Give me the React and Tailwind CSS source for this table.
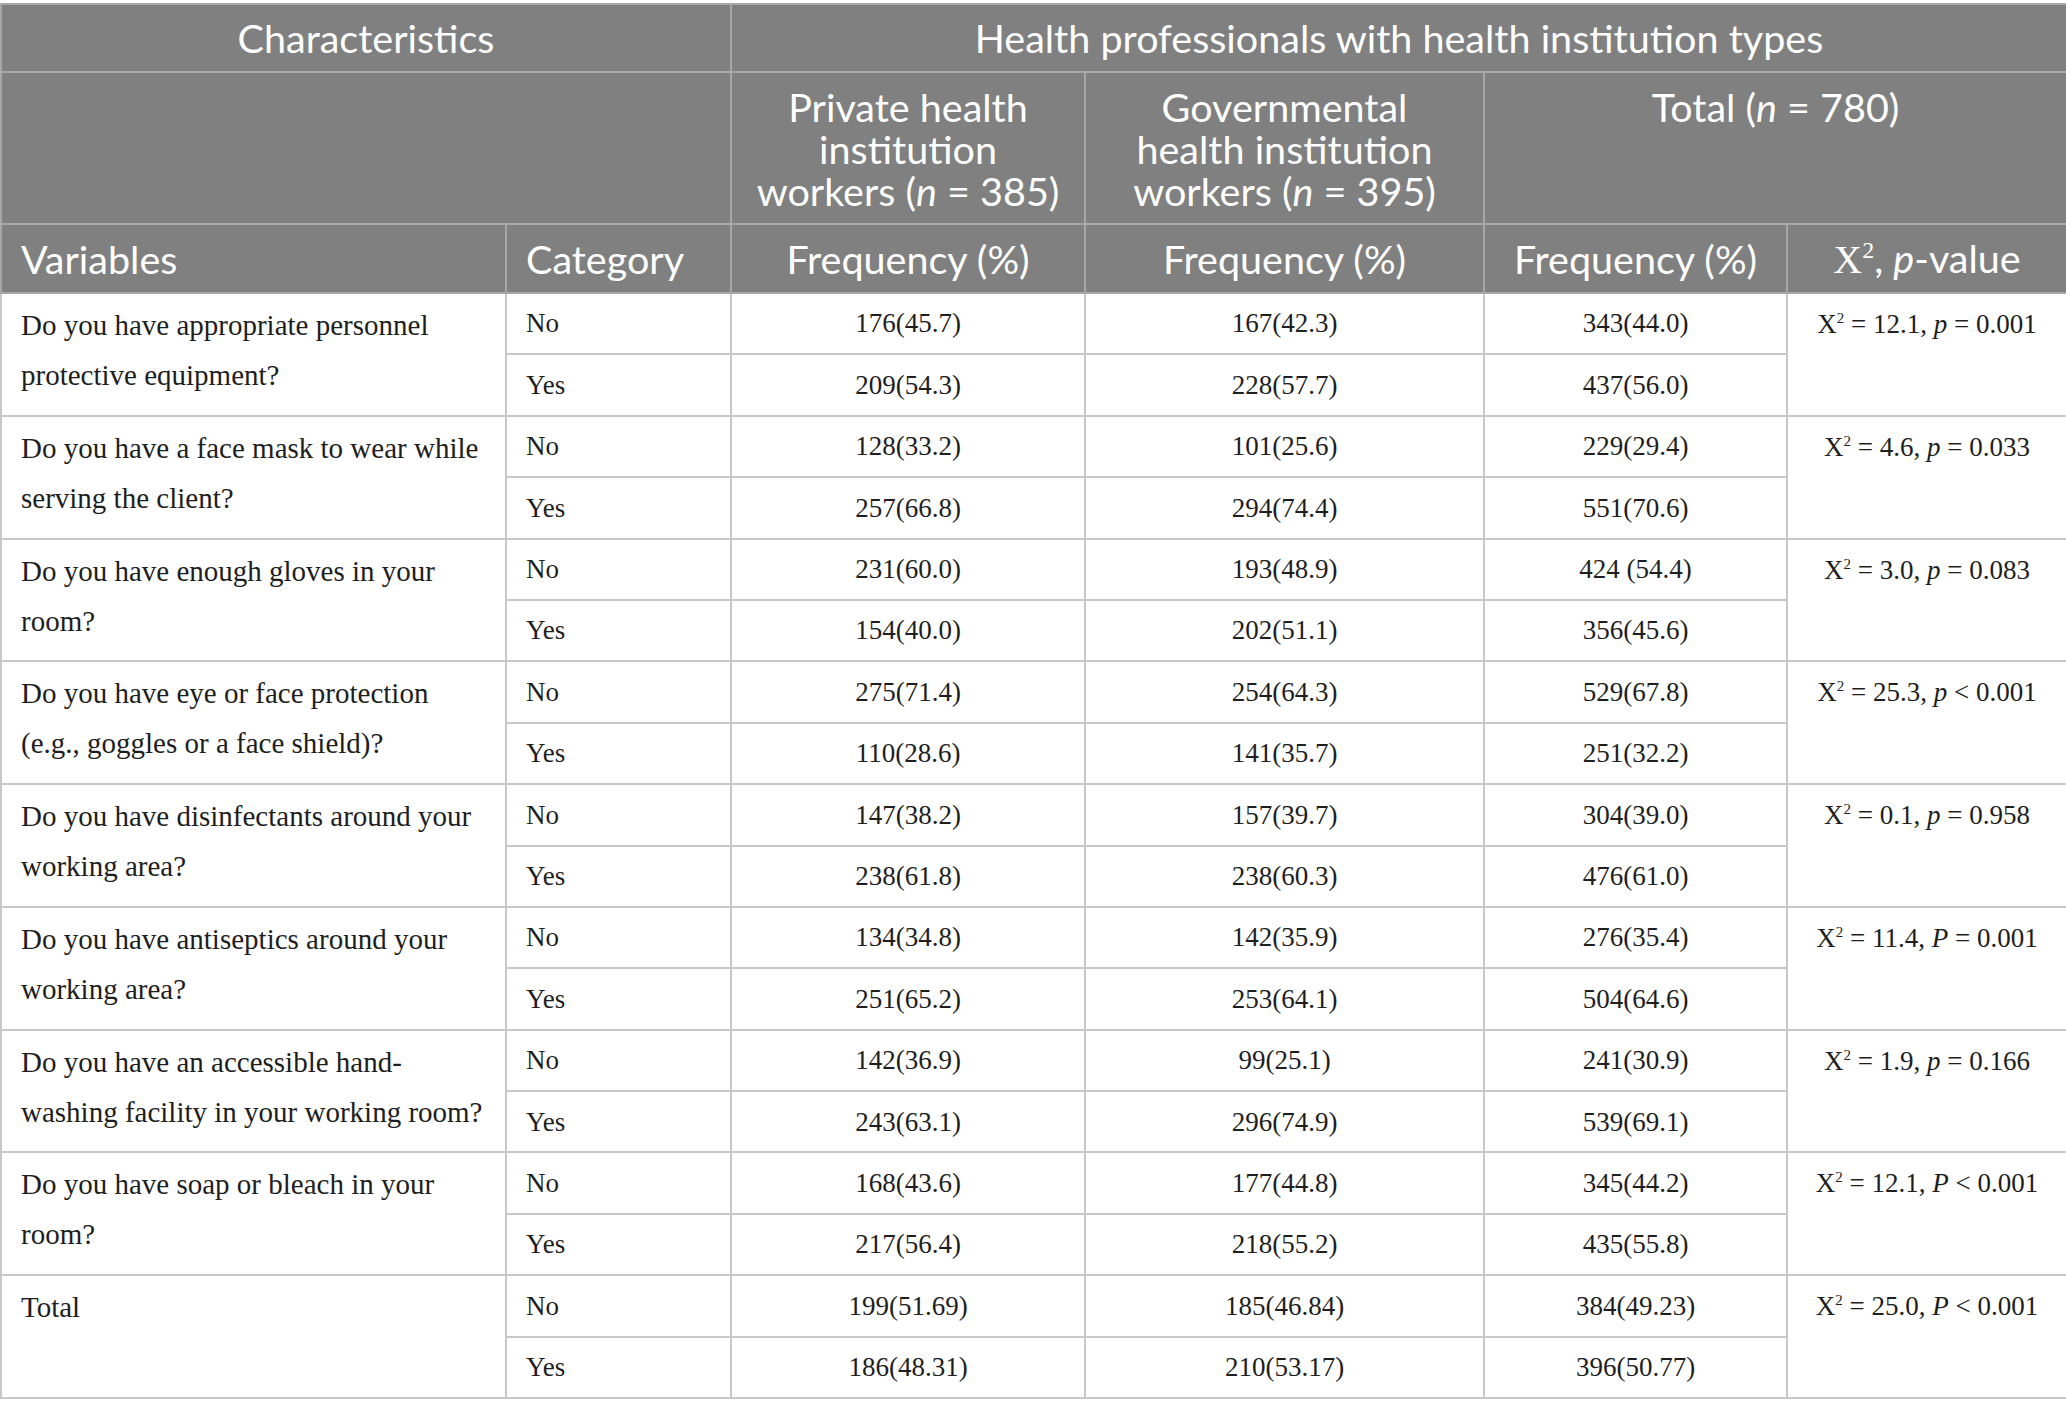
import React from "react";

const rows = [
  {
    q: ["Do you have appropriate personnel", "protective equipment?"],
    no: ["176(45.7)", "167(42.3)", "343(44.0)"],
    yes: ["209(54.3)", "228(57.7)", "437(56.0)"],
    chi: "12.1",
    p: "p",
    op: "=",
    val: "0.001",
  },
  {
    q: ["Do you have a face mask to wear while", "serving the client?"],
    no: ["128(33.2)", "101(25.6)", "229(29.4)"],
    yes: ["257(66.8)", "294(74.4)", "551(70.6)"],
    chi: "4.6",
    p: "p",
    op: "=",
    val: "0.033",
  },
  {
    q: ["Do you have enough gloves in your", "room?"],
    no: ["231(60.0)", "193(48.9)", "424 (54.4)"],
    yes: ["154(40.0)", "202(51.1)", "356(45.6)"],
    chi: "3.0",
    p: "p",
    op: "=",
    val: "0.083",
  },
  {
    q: ["Do you have eye or face protection", "(e.g., goggles or a face shield)?"],
    no: ["275(71.4)", "254(64.3)", "529(67.8)"],
    yes: ["110(28.6)", "141(35.7)", "251(32.2)"],
    chi: "25.3",
    p: "p",
    op: "<",
    val: "0.001",
  },
  {
    q: ["Do you have disinfectants around your", "working area?"],
    no: ["147(38.2)", "157(39.7)", "304(39.0)"],
    yes: ["238(61.8)", "238(60.3)", "476(61.0)"],
    chi: "0.1",
    p: "p",
    op: "=",
    val: "0.958",
  },
  {
    q: ["Do you have antiseptics around your", "working area?"],
    no: ["134(34.8)", "142(35.9)", "276(35.4)"],
    yes: ["251(65.2)", "253(64.1)", "504(64.6)"],
    chi: "11.4",
    p: "P",
    op: "=",
    val: "0.001",
  },
  {
    q: ["Do you have an accessible hand-", "washing facility in your working room?"],
    no: ["142(36.9)", "99(25.1)", "241(30.9)"],
    yes: ["243(63.1)", "296(74.9)", "539(69.1)"],
    chi: "1.9",
    p: "p",
    op: "=",
    val: "0.166",
  },
  {
    q: ["Do you have soap or bleach in your", "room?"],
    no: ["168(43.6)", "177(44.8)", "345(44.2)"],
    yes: ["217(56.4)", "218(55.2)", "435(55.8)"],
    chi: "12.1",
    p: "P",
    op: "<",
    val: "0.001",
  },
  {
    q: ["Total"],
    no: ["199(51.69)", "185(46.84)", "384(49.23)"],
    yes: ["186(48.31)", "210(53.17)", "396(50.77)"],
    chi: "25.0",
    p: "P",
    op: "<",
    val: "0.001",
  },
];

const th = "border-2 border-[#a6a7a6] font-normal";
const td = "border-2 border-[#c8c8c8]";

const Chi = ({ r }) => (
  <span>
    X<sup className="text-[15px] -top-[10px]">2</sup> = {r.chi},{" "}
    <i>{r.p}</i> {r.op} {r.val}
  </span>
);

export default function App() {
  return (
    <div className="min-h-screen bg-white pt-[3px]">
      <table
        className="w-[2066px] table-fixed border-collapse text-[#1e1e1e]"
        style={{ fontFamily: '"Liberation Serif", "Times New Roman", serif' }}
      >
        <colgroup>
          <col className="w-[505px]" />
          <col className="w-[225px]" />
          <col className="w-[354px]" />
          <col className="w-[399px]" />
          <col className="w-[303px]" />
          <col className="w-[280px]" />
        </colgroup>
        <thead className="bg-[#7f807f] text-white font-['Lato',_'Open_Sans',_sans-serif] text-[39.5px]">
          <tr className="h-[68px]">
            <th colSpan={2} className={`${th} align-middle text-center`}>
              Characteristics
            </th>
            <th colSpan={4} className={`${th} align-middle text-center`}>
              Health professionals with health institution types
            </th>
          </tr>
          <tr className="h-[152px]">
            <th colSpan={2} className={th}></th>
            <th className={`${th} align-top text-center pt-[13px] leading-[42px]`}>
              <div>Private health</div>
              <div>institution</div>
              <div>
                workers (<i>n</i> = 385)
              </div>
            </th>
            <th className={`${th} align-top text-center pt-[13px] leading-[42px]`}>
              <div>Governmental</div>
              <div>health institution</div>
              <div>
                workers (<i>n</i> = 395)
              </div>
            </th>
            <th colSpan={2} className={`${th} align-top text-center pt-[13px] leading-[42px]`}>
              Total (<i>n</i> = 780)
            </th>
          </tr>
          <tr className="h-[69px]">
            <th className={`${th} text-left pl-[19px]`}>Variables</th>
            <th className={`${th} text-left pl-[19px]`}>Category</th>
            <th className={`${th} text-center`}>Frequency (%)</th>
            <th className={`${th} text-center`}>Frequency (%)</th>
            <th className={`${th} text-center`}>Frequency (%)</th>
            <th className={`${th} text-center`}>
              <span className="font-['Liberation_Serif',_serif] text-[40px]">
                X<sup className="text-[24px] -top-[15px]">2</sup>
              </span>
              , <i>p</i>-value
            </th>
          </tr>
        </thead>
        <tbody className="text-[27px]">
          {rows.map((r, i) => (
            <React.Fragment key={i}>
              <tr className="h-[61.4px]">
                <td
                  rowSpan={2}
                  className={`${td} align-top pl-[19px] pr-[8px] pt-[6px] leading-[50px] text-[29px]`}
                >
                  {r.q.map((line, j) => (
                    <div key={j} className="whitespace-nowrap">
                      {line}
                    </div>
                  ))}
                </td>
                <td className={`${td} pl-[19px] align-middle`}>No</td>
                {r.no.map((v, j) => (
                  <td key={j} className={`${td} text-center align-middle`}>
                    {v}
                  </td>
                ))}
                <td
                  rowSpan={2}
                  className={`${td} align-top text-center pt-[10px] leading-[41px]`}
                >
                  <Chi r={r} />
                </td>
              </tr>
              <tr className="h-[61.4px]">
                <td className={`${td} pl-[19px] align-middle`}>Yes</td>
                {r.yes.map((v, j) => (
                  <td key={j} className={`${td} text-center align-middle`}>
                    {v}
                  </td>
                ))}
              </tr>
            </React.Fragment>
          ))}
        </tbody>
      </table>
    </div>
  );
}
